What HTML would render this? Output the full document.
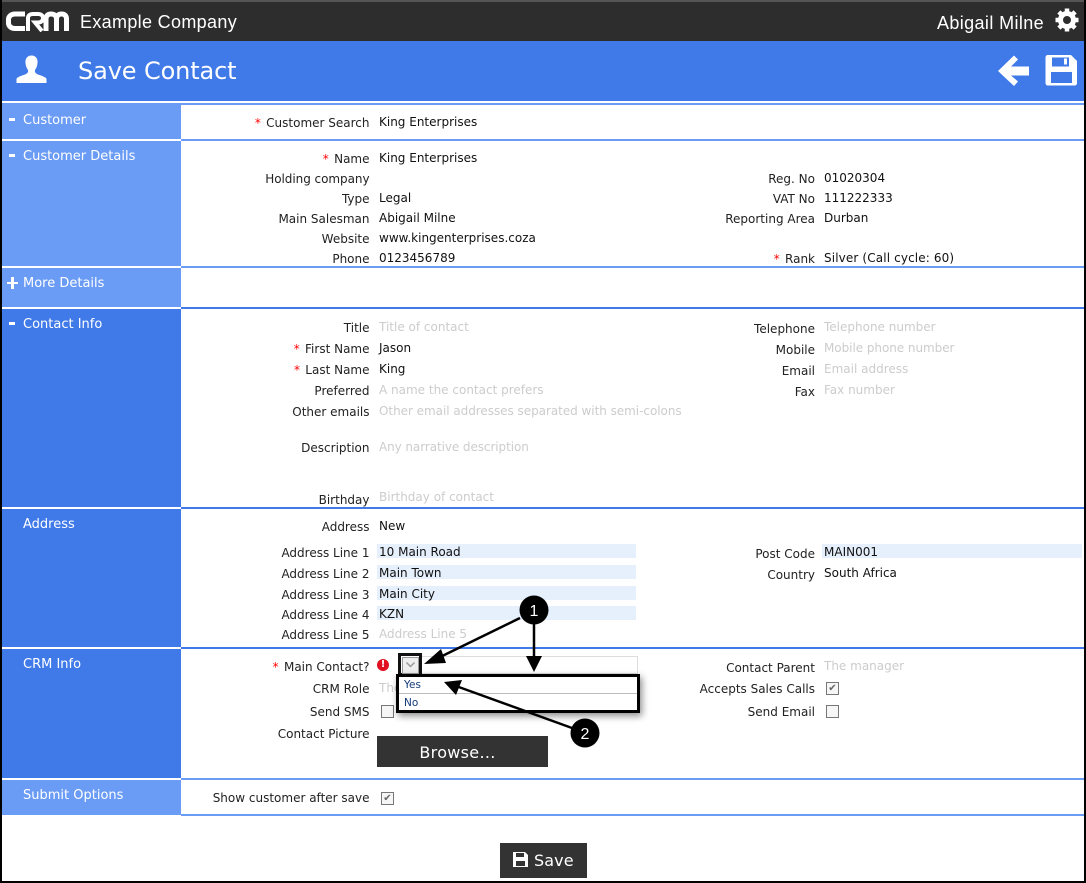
<!DOCTYPE html>
<html><head><meta charset="utf-8">
<style>
html,body{margin:0;padding:0;background:#fff}
#p{position:relative;width:1086px;height:883px;overflow:hidden;background:#fff;font-family:"DejaVu Sans","Liberation Sans",sans-serif;font-size:12px;color:#222}
#p div,#p span.a{position:absolute;white-space:nowrap}
.s{left:2px;width:179px}
.lt{background:#6a9bf5}.dk{background:#4079e8}
.st{left:23px;color:#fff;font-size:13px;line-height:16px;transform:translateY(1px)}
.sg{left:9px;width:6px;height:3px;background:#fff}
.hl{left:181px;right:2px;height:2px}
.l,.r{line-height:16px;text-align:right;transform:translateY(1px)}
.l{left:100px;width:269.5px}
.r{left:600px;width:215px}
.v{left:379px;line-height:16px;color:#111;transform:translateY(1px)}
.w{left:824px;line-height:16px;color:#111;transform:translateY(1px)}
.g{color:#ccc}
i{color:#f00;font-style:normal;margin-right:1.5px}
.f{background:#e6effc;height:14px}
.c{width:11px;height:11px;border:1px solid #777;background:#f6f6f6}
</style></head><body><div id="p">

<div style="left:0;top:0;width:1086px;height:2px;background:#555"></div>
<div style="left:2px;top:2px;width:1082px;height:39px;background:#2d2d2d"></div>
<div style="left:2px;top:41px;width:1082px;height:60px;background:#4079e8"></div>

<svg style="position:absolute;left:6px;top:11px" width="64" height="21" viewBox="0 0 64 21">
<path d="M19 3H9C5 3 2.500 5.500 2.500 8.500V12C2.500 15 5 17.500 9 17.500H19" fill="none" stroke="#fff" stroke-width="5"/>
<path d="M22 20V7C22 4.500 24 3 27 3H32C35 3 37 4.500 37 7C37 10 35 11.500 32 11.500H29L36 20" fill="none" stroke="#fff" stroke-width="4"/>
<path d="M40 20V8C40 4.500 42 3 45 3C48.500 3 50.500 5 50.500 8V20M50.500 8C50.500 4.500 52.500 3 55.500 3C59 3 60.500 5 60.500 8V20" fill="none" stroke="#fff" stroke-width="5"/>
</svg>
<div style="left:80px;top:10px;color:#fff;font-size:18px;line-height:24px;font-family:'Liberation Sans',sans-serif;letter-spacing:.33px">Example Company</div>
<div style="left:937px;top:11px;color:#fff;font-size:18px;line-height:24px;font-family:'Liberation Sans',sans-serif;letter-spacing:.38px">Abigail Milne</div>
<svg style="position:absolute;left:1054px;top:7px" width="26" height="26" viewBox="0 0 26 26">
<circle cx="13" cy="13" r="6.500" fill="none" stroke="#fff" stroke-width="5"/>
<path d="M13 1.500V6M13 20V24.500M1.500 13H6M20 13H24.500M4.900 4.900L8 8M18 18L21.100 21.100M21.100 4.900L18 8M8 18L4.900 21.100" stroke="#fff" stroke-width="4.500"/>
</svg>

<svg style="position:absolute;left:16px;top:55px" width="31" height="30" viewBox="0 0 31 30">
<path d="M15.500 0.500C20 0.500 22 4 21.500 8C21.200 11 20.500 13 19 15C18.500 17 19.500 18.500 22 19.500C26 21 30 22 30.500 24V28H0.500V24C1 22 5 21 9 19.500C11.500 18.500 12.500 17 12 15C10.500 13 9.800 11 9.500 8C9 4 11 0.500 15.500 0.500Z" fill="#fff"/>
</svg>
<div style="left:78px;top:55px;color:#fff;font-size:24px;line-height:32px;letter-spacing:-.12px">Save Contact</div>
<svg style="position:absolute;left:997px;top:54px" width="34" height="33" viewBox="0 0 34 33">
<path d="M1 17L17 1.500L21 5.500L14 12.500H32V21.500H14L21 27.500L17 32Z" fill="#fff"/>
</svg>
<svg style="position:absolute;left:1045px;top:54px" width="33" height="32" viewBox="0 0 33 32">
<path d="M3 1H26L32 7V29C32 30.500 31 31.500 29.500 31.500H3C1.500 31.500 .5 30.500 .5 29V3.500C.5 2 1.500 1 3 1Z" fill="#fff"/>
<rect x="7" y="3.500" width="17" height="9" fill="#4079e8"/><rect x="19" y="4.500" width="3" height="6" fill="#fff"/>
<rect x="6" y="18" width="21" height="11" fill="#4079e8"/>
</svg>

<!-- sidebar -->
<div class="s lt" style="top:103px;height:36px"></div>
<div class="s lt" style="top:141px;height:125px"></div>
<div class="s lt" style="top:268px;height:39px"></div>
<div class="s dk" style="top:309px;height:198px"></div>
<div class="s dk" style="top:509px;height:138px"></div>
<div class="s dk" style="top:649px;height:129px"></div>
<div class="s lt" style="top:780px;height:35px"></div>

<div class="hl lt" style="top:103px"></div>
<div class="hl lt" style="top:139px"></div>
<div class="hl lt" style="top:266px"></div>
<div class="hl dk" style="top:307px"></div>
<div class="hl dk" style="top:507px"></div>
<div class="hl dk" style="top:647px"></div>
<div class="hl lt" style="top:778px"></div>
<div class="hl lt" style="top:814px"></div>

<div class="sg" style="top:118px"></div><div class="st" style="top:112px">Customer</div>
<div class="sg" style="top:154px"></div><div class="st" style="top:148px">Customer Details</div>
<div style="left:7px;top:282px;width:11px;height:2px;background:#fff"></div><div style="left:11px;top:277px;width:3px;height:12px;background:#fff"></div><div class="st" style="top:275px">More Details</div>
<div class="sg" style="top:322px"></div><div class="st" style="top:316px">Contact Info</div>
<div class="st" style="top:516px">Address</div>
<div class="st" style="top:656px">CRM Info</div>
<div class="st" style="top:787px">Submit Options</div>

<!-- Customer -->
<div class="l" style="top:114px"><i>*</i> Customer Search</div><div class="v" style="top:113px">King Enterprises</div>
<!-- Details -->
<div class="l" style="top:150px"><i>*</i> Name</div><div class="v" style="top:149px">King Enterprises</div>
<div class="l" style="top:170px;letter-spacing:-.05px">Holding company</div>
<div class="l" style="top:190px">Type</div><div class="v" style="top:189px">Legal</div>
<div class="l" style="top:210px">Main Salesman</div><div class="v" style="top:209px">Abigail Milne</div>
<div class="l" style="top:230px">Website</div><div class="v" style="top:229px">www.kingenterprises.coza</div>
<div class="l" style="top:250px">Phone</div><div class="v" style="top:249px">0123456789</div>
<div class="r" style="top:170px">Reg. No</div><div class="w" style="top:169px">01020304</div>
<div class="r" style="top:190px">VAT No</div><div class="w" style="top:189px">111222333</div>
<div class="r" style="top:210px">Reporting Area</div><div class="w" style="top:209px">Durban</div>
<div class="r" style="top:250px"><i>*</i> Rank</div><div class="w" style="top:249px;letter-spacing:.13px">Silver (Call cycle: 60)</div>
<!-- Contact -->
<div class="l" style="top:319px">Title</div><div class="v g" style="top:318px">Title of contact</div>
<div class="l" style="top:340px"><i>*</i> First Name</div><div class="v" style="top:339px">Jason</div>
<div class="l" style="top:361px"><i>*</i> Last Name</div><div class="v" style="top:360px">King</div>
<div class="l" style="top:382px">Preferred</div><div class="v g" style="top:381px">A name the contact prefers</div>
<div class="l" style="top:403px">Other emails</div><div class="v g" style="top:402px;letter-spacing:-.04px">Other email addresses separated with semi-colons</div>
<div class="l" style="top:439px">Description</div><div class="v g" style="top:438px;letter-spacing:-.08px">Any narrative description</div>
<div class="l" style="top:491px">Birthday</div><div class="v g" style="top:488px">Birthday of contact</div>
<div class="r" style="top:320px">Telephone</div><div class="w g" style="top:318px">Telephone number</div>
<div class="r" style="top:341px">Mobile</div><div class="w g" style="top:339px;letter-spacing:-.05px">Mobile phone number</div>
<div class="r" style="top:362px">Email</div><div class="w g" style="top:360px">Email address</div>
<div class="r" style="top:383px">Fax</div><div class="w g" style="top:381px">Fax number</div>
<!-- Address -->
<div class="l" style="top:518px">Address</div><div class="v" style="top:517px">New</div>
<div class="f" style="left:377px;top:544px;width:259px"></div>
<div class="f" style="left:377px;top:565px;width:259px"></div>
<div class="f" style="left:377px;top:586px;width:259px"></div>
<div class="f" style="left:377px;top:606px;width:259px"></div>
<div class="f" style="left:822px;top:544px;width:260px"></div>
<div class="l" style="top:544px">Address Line 1</div><div class="v" style="top:543px">10 Main Road</div>
<div class="l" style="top:565px">Address Line 2</div><div class="v" style="top:564px">Main Town</div>
<div class="l" style="top:586px">Address Line 3</div><div class="v" style="top:585px">Main City</div>
<div class="l" style="top:606px">Address Line 4</div><div class="v" style="top:605px">KZN</div>
<div class="l" style="top:626px">Address Line 5</div><div class="v g" style="top:625px">Address Line 5</div>
<div class="r" style="top:545px">Post Code</div><div class="w" style="top:543px">MAIN001</div>
<div class="r" style="top:566px">Country</div><div class="w" style="top:564px">South Africa</div>
<!-- CRM -->
<div class="l" style="top:658px"><i>*</i> Main Contact?</div>
<div style="left:377px;top:659px;width:12px;height:12px;border-radius:50%;background:#e01020;color:#fff;font-weight:bold;font-size:10px;line-height:12px;text-align:center">!</div>
<div style="left:400px;top:656px;width:236px;height:16px;border:1px solid #ddd"></div>
<div style="left:398px;top:653px;width:18px;height:17px;border:3px solid #111;background:#fff"></div>
<div style="left:402px;top:657px;width:15px;height:15px;border:1px solid #999;background:#eee"></div>
<svg style="position:absolute;left:405px;top:661px" width="11" height="8" viewBox="0 0 11 8"><path d="M1.500 1.500L5.500 5.500L9.500 1.500" fill="none" stroke="#999" stroke-width="1.500"/></svg>
<div class="l" style="top:680px">CRM Role</div><div class="v g" style="top:679px">The</div>
<div class="l" style="top:703px">Send SMS</div><div class="c" style="left:381px;top:705px"></div>
<div class="l" style="top:725px">Contact Picture</div>
<div style="left:377px;top:736px;width:161px;padding-right:10px;height:31px;background:#333;color:#fff;font-size:16px;line-height:33px;text-align:center;letter-spacing:.3px">Browse...</div>
<div style="left:396px;top:674px;width:238px;height:33px;border:3px solid #000;background:#fff;box-shadow:2px 3px 7px rgba(0,0,0,.45)"></div>
<div style="left:399px;top:693px;width:238px;height:1px;background:#bbb"></div>
<div style="left:404px;top:678px;font-size:10.500px;line-height:14px;color:#123a78">Yes</div>
<div style="left:404px;top:696px;font-size:10.500px;line-height:14px;color:#123a78">No</div>
<div class="r" style="top:659px">Contact Parent</div><div class="w g" style="top:657px">The manager</div>
<div class="r" style="top:680px">Accepts Sales Calls</div>
<div class="c" style="left:826px;top:682px;font-size:10px;line-height:11px;text-align:center;color:#666">✔</div>
<div class="r" style="top:703px">Send Email</div><div class="c" style="left:826px;top:705px"></div>
<!-- Submit -->
<div class="l" style="top:789px">Show customer after save</div>
<div class="c" style="left:381px;top:792px;font-size:10px;line-height:11px;text-align:center;color:#666">✔</div>

<div style="left:500px;top:843px;width:87px;height:35px;background:#333"></div>
<svg style="position:absolute;left:512px;top:851px" width="17" height="17" viewBox="0 0 17 17">
<path d="M1 1H13L16 4V16H1Z" fill="#fff"/><rect x="4" y="2" width="8" height="4" fill="#333"/><rect x="4" y="10" width="9" height="5" fill="#333"/>
</svg>
<div style="left:534px;top:850px;color:#fff;font-size:16px;line-height:22px;letter-spacing:.1px">Save</div>

<!-- annotations -->
<svg style="position:absolute;left:0;top:0" width="1086" height="883" viewBox="0 0 1086 883">
<g stroke="#000" stroke-width="2.500" fill="none">
<path d="M520 618L432 661"/><path d="M534 620V664"/><path d="M572 728L456 686"/>
</g>
<g fill="#000">
<path d="M424 664L441 649L446 663Z"/><path d="M534 672L526 656H542Z"/><path d="M444 682L462 680L456 695Z"/>
<circle cx="534" cy="610" r="14.500"/><circle cx="585" cy="733" r="14.500"/>
</g>
<text x="534" y="616" fill="#fff" font-family="Liberation Sans,sans-serif" font-size="16" text-anchor="middle">1</text>
<text x="585" y="739" fill="#fff" font-family="Liberation Sans,sans-serif" font-size="16" text-anchor="middle">2</text>
</svg>

<!-- frame -->
<div style="left:0;top:0;width:2px;height:883px;background:#000"></div>
<div style="right:0;top:0;width:2px;height:883px;background:#000"></div>
<div style="left:0;top:881px;width:1086px;height:2px;background:#000"></div>
</div></body></html>
